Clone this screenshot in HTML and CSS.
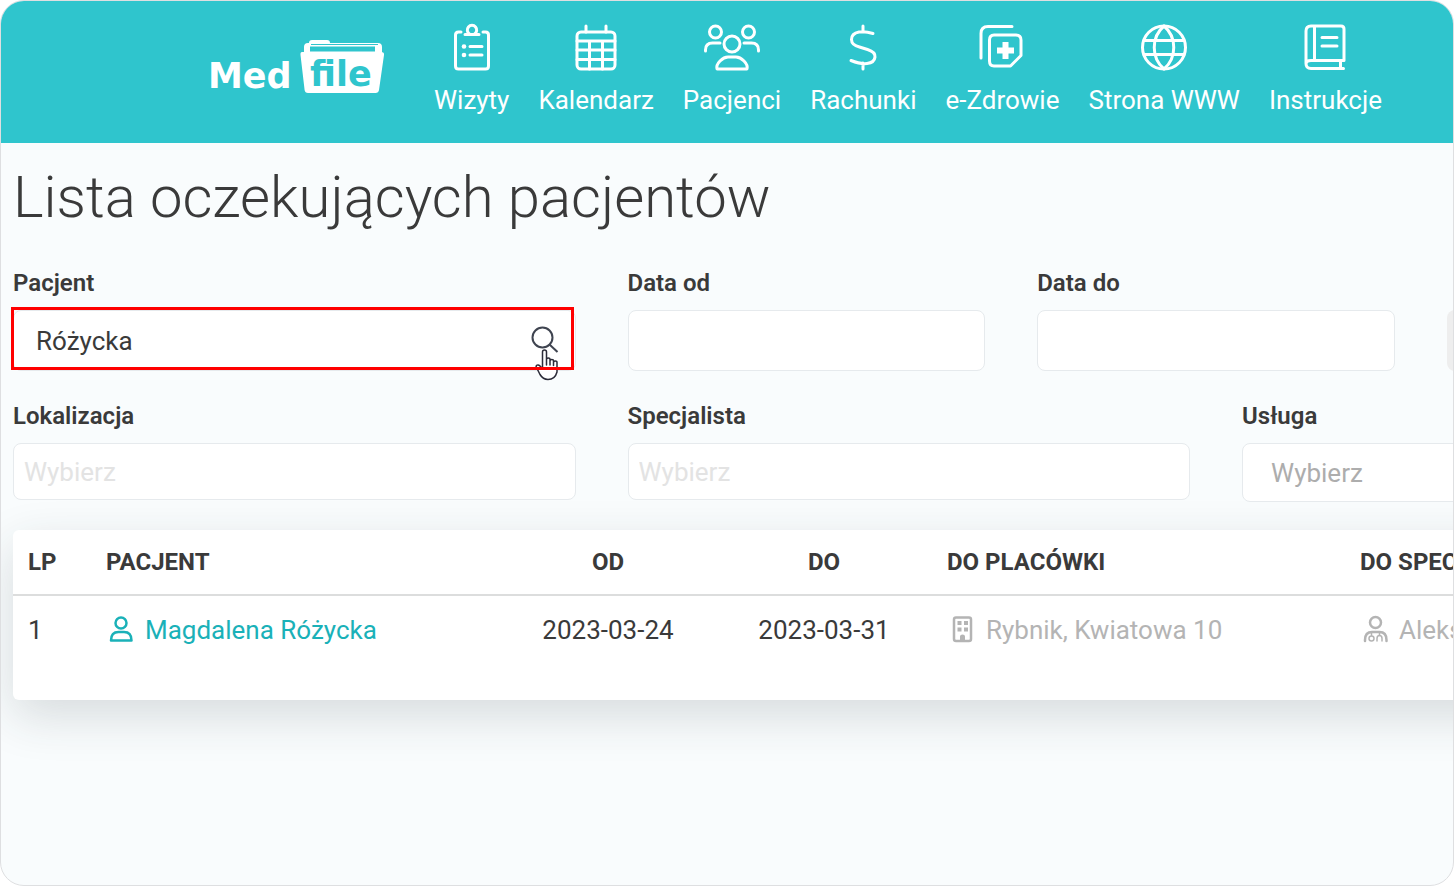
FILE: index.html
```html
<!DOCTYPE html>
<html lang="pl">
<head>
<meta charset="utf-8">
<meta name="viewport" content="width=device-width, initial-scale=1">
<title>Lista oczekujących pacjentów</title>
<link rel="stylesheet" href="styles.css">
</head>
<body>
<div class="frame">
  <header class="topbar">
    <a class="logo" href="#" aria-label="MedFile">
      <svg width="176" height="56" viewBox="0 0 176 56">
        <text class="logo-text" x="-2" y="48">Med</text>
        <path d="M94 14V7q0-4 4-4h1q0-3 3-3h15q3 0 3 3h48q4 0 4 4v7z" fill="#fff"/>
        <path d="M101 4.500h67" stroke="#2fc5cd" stroke-width="1" fill="none"/>
        <path d="M100 6.500h65v5h-65z" fill="#2fc5cd"/>
        <path d="M92 12h79q3.500 0 3 3l-5 35q-.5 3-3.500 3H98q-3 0-3.400-3L90.500 15q-.3-3 1.500-3z" fill="#fff"/>
        <text class="logo-text logo-text-dark" x="100" y="46">file</text>
      </svg>
    </a>
    <nav class="nav">
      <a class="nav-item" href="#">
        <svg class="nav-icon" width="48" height="48" viewBox="0 0 48 48">
          <path d="M13 9h-2.500q-3 0-3 3v31q0 3 3 3h27q3 0 3-3V12q0-3-3-3H35"/>
          <path d="M17 11.500h14M21.500 11a4.700 4.700 0 1 1 5 0"/>
          <path d="M22 23.500h12M22 32h12"/><circle class="dot" cx="16" cy="23.500" r="2.300"/><circle class="dot" cx="16" cy="32" r="2.300"/>
        </svg>
        <span>Wizyty</span>
      </a>
      <a class="nav-item" href="#">
        <svg class="nav-icon" width="48" height="48" viewBox="0 0 48 48">
          <rect x="5" y="9" width="38" height="37" rx="4"/>
          <path d="M14 3v6M34 3v6M5 18h38M5 27h38M5 36.500h38M17.500 18v28M30.500 18v28"/>
        </svg>
        <span>Kalendarz</span>
      </a>
      <a class="nav-item" href="#">
        <svg class="nav-icon" width="60" height="48" viewBox="0 0 60 48">
          <circle cx="13.500" cy="9" r="6"/><circle cx="46.500" cy="9" r="6"/><circle cx="30" cy="21" r="8"/>
          <path d="M3.500 28v-1q0-7 7-7H18M56.500 28v-1q0-7-7-7H42"/>
          <path d="M15 46h30q1-4-3-8-4-4-8-4h-8q-4 0-8 4-4 4-3 8z"/>
        </svg>
        <span>Pacjenci</span>
      </a>
      <a class="nav-item" href="#">
        <svg class="nav-icon" width="48" height="48" viewBox="0 0 48 48">
          <path d="M24 3v6M24 40v6M34 10.500Q26 8 20 9 12.500 10.500 12.500 16.500q0 5.500 8 7.500l8 2.500q8 2.500 7.500 7.500-.5 5.500-8 6.500-6.500.8-16-3"/>
        </svg>
        <span>Rachunki</span>
      </a>
      <a class="nav-item" href="#">
        <svg class="nav-icon" width="48" height="48" viewBox="0 0 48 48">
          <path d="M3 35V10.500q0-7 7-7h24"/>
          <path d="M16 12h22q5 0 5 5v15.500L32.500 43H16q-4.500 0-4.500-5V17q0-5 4.500-5z"/>
          <path class="plus" d="M27.500 19v17M19 27.500h17"/>
        </svg>
        <span>e-Zdrowie</span>
      </a>
      <a class="nav-item" href="#">
        <svg class="nav-icon" width="48" height="48" viewBox="0 0 48 48">
          <circle cx="24" cy="24.500" r="21.500"/>
          <path d="M24 3c-13 11-13 32 0 43M24 3c13 11 13 32 0 43M4 17.500h40M4 31.500h40"/>
        </svg>
        <span>Strona WWW</span>
      </a>
      <a class="nav-item" href="#">
        <svg class="nav-icon" width="48" height="48" viewBox="0 0 48 48">
          <path d="M42.500 45.500H10q-5 0-5-5V8q0-5 5-5h30q3 0 3 3v31.500H10q-5 0-5 3.500M39.500 37.500v8M13.500 3v34.500M21 14.500h15M21 23h15"/>
        </svg>
        <span>Instrukcje</span>
      </a>
    </nav>
  </header>

  <main class="content">
    <h1 class="title">Lista oczekujących pacjentów</h1>

    <form class="filters">
      <div class="field field-wide">
        <label for="patient">Pacjent</label>
        <div class="search">
          <input id="patient" class="control control-padded" type="text" value="Różycka">
          <button class="search-button" type="button" aria-label="Szukaj">
            <svg width="30" height="30" viewBox="0 0 30 30"><circle cx="12.500" cy="12.500" r="10"/><path d="M19.500 19.500l8 7.500"/></svg>
          </button>
          <svg class="pointer" width="24" height="32" viewBox="0 0 24 32">
            <path d="M7.500 20V3q0-2 2-2t2 2v13-5.500q0-1.500 1.800-1.500T15 10.500V16v-4q0-1.500 1.800-1.500t1.700 1.500v4.500-3q0-1.500 1.800-1.500T22 13.500V23q-2 7.500-9 7.500-5 0-8-5L1.500 18.500q-1-1.500.5-2.300t3 .8z"/>
          </svg>
        </div>
      </div>
      <div class="field">
        <label for="from">Data od</label>
        <input id="from" class="control" type="text">
      </div>
      <div class="field">
        <label for="to">Data do</label>
        <input id="to" class="control" type="text">
      </div>
      <div class="field field-action">
        <button class="filter-button" type="button" aria-label="Filtruj"></button>
      </div>
      <div class="field field-wide">
        <label for="location">Lokalizacja</label>
        <input id="location" class="control control-tags" type="text" placeholder="Wybierz">
      </div>
      <div class="field field-wide">
        <label for="specialist">Specjalista</label>
        <input id="specialist" class="control control-tags" type="text" placeholder="Wybierz">
      </div>
      <div class="field field-wide">
        <label for="service">Usługa</label>
        <select id="service" class="control control-select"><option>Wybierz</option></select>
      </div>
    </form>

    <section class="card">
      <table class="list">
        <colgroup><col class="c-no"><col class="c-patient"><col class="c-date"><col class="c-date"><col class="c-place"><col></colgroup>
        <thead>
          <tr><th>LP</th><th>PACJENT</th><th class="center">OD</th><th class="center">DO</th><th>DO PLACÓWKI</th><th>DO SPECJALISTY</th></tr>
        </thead>
        <tbody>
          <tr>
            <td>1</td>
            <td><a class="entry link" href="#">
              <svg class="entry-icon" width="30" height="30" viewBox="0 0 30 30"><circle cx="15" cy="8" r="5.500"/><path d="M5 25.500h20.500q0-8.500-7.500-8.500h-5.500q-7.500 0-7.500 8.500z"/></svg>Magdalena Różycka</a></td>
            <td class="center">2023-03-24</td>
            <td class="center">2023-03-31</td>
            <td><span class="entry muted">
              <svg class="entry-icon" width="30" height="30" viewBox="0 0 30 30"><rect x="7" y="2.500" width="17" height="23.500" rx="2"/><path class="solid" d="M10.500 6h4v4h-4zM17 6h4v4h-4zM10.500 12.500h4v4h-4zM17 12.500h4v4h-4zM13 26.500v-5q0-2 2.500-2t2.500 2v5z"/></svg>Rybnik, Kwiatowa 10</span></td>
            <td><span class="entry muted">
              <svg class="entry-icon" width="30" height="30" viewBox="0 0 30 30"><circle cx="15.500" cy="7.500" r="5.500"/><path d="M5 26v-1q0-8 7-8h7.500q7 0 7 8v1"/><path class="fine" d="M11.500 17v3.500M19.500 17v3.500"/><circle class="fine" cx="11.500" cy="23.500" r="2.500"/><path class="fine" d="M17 26v-2.500q0-3 2.500-3t2.500 3V26"/></svg>Aleksandra Nowak</span></td>
          </tr>
        </tbody>
      </table>
    </section>
  </main>
</div>
</body>
</html>
```
FILE: styles.css
```css
* { box-sizing: border-box; }

body {
  margin: 0;
  background: #fff;
  color: #3a3a3a;
  font: 26px/32px Roboto, "Liberation Sans", sans-serif;
}

.frame {
  min-height: 100vh;
  overflow: hidden;
  border: 1px solid #dedfe1;
  border-radius: 24px;
  background: #f9fcfd;
}

.topbar {
  display: flex;
  align-items: flex-start;
  gap: 48px;
  padding: 22px 24px 27px 209px;
  background: #2fc5cd;
}

.logo { flex: none; margin-top: 17px; }
.logo svg { display: block; overflow: visible; }
.logo-text { fill: #fff; font: 700 35px "DejaVu Sans", sans-serif; }
.logo-text-dark { fill: #2fc5cd; }

.nav { display: flex; gap: 29px; }
.nav-item {
  display: flex;
  flex-direction: column;
  align-items: center;
  gap: 13px;
  color: #fff;
  text-decoration: none;
  white-space: nowrap;
}
.nav-icon { fill: none; stroke: #fff; stroke-width: 3; stroke-linecap: round; stroke-linejoin: round; }
.nav-icon .dot { fill: #fff; stroke: none; }
.nav-icon .plus { stroke-width: 6; stroke-linecap: butt; }

.content { padding: 19px 12px; }

.title {
  margin: 0 0 37px;
  font-size: 58px;
  line-height: 70px;
  font-weight: 300;
  white-space: nowrap;
}

.filters {
  display: grid;
  grid-template-columns: repeat(12, 1fr);
  gap: 31px 52px;
  width: 168.5%;
}
.field { grid-column: span 2; display: flex; flex-direction: column; gap: 13px; min-width: 0; }
.field-wide { grid-column: span 3; }
.field-action { justify-content: flex-end; grid-column: span 5; }
.field label { font-size: 24px; line-height: 28px; font-weight: 600; }

.control {
  display: block;
  width: 100%;
  height: 61px;
  padding: 0 10px;
  border: 1px solid #e6eaed;
  border-radius: 8px;
  outline: 0;
  background: #fff;
  color: #3a3a3a;
  font: inherit;
}
.control-padded { padding: 0 60px 0 22px; }
.control-tags { height: 57px; }
.control-tags::placeholder { color: #e3e3e3; opacity: 1; }
.control-select { height: 59px; padding: 0 28px; color: #adadad; appearance: none; }

.search { position: relative; }
.search::after {
  content: "";
  position: absolute;
  inset: -3px 2px 1px -2px;
  border: 3px solid #f00;
  pointer-events: none;
}
.search-button {
  position: absolute;
  top: 15px;
  right: 16px;
  padding: 0;
  border: 0;
  background: none;
  cursor: pointer;
}
.search-button svg { display: block; fill: none; stroke: #3f4450; stroke-width: 2; }
.pointer {
  position: absolute;
  top: 39px;
  right: 17px;
  fill: #fff;
  stroke: #2b2b38;
  stroke-width: 1.5;
  stroke-linejoin: round;
}

.filter-button { width: 204px; height: 61px; border: 0; border-radius: 8px; background: #eee; }

.card {
  width: 168.5%;
  margin-top: 28px;
  padding-bottom: 37px;
  border-radius: 6px;
  background: #fff;
  box-shadow: 0 16px 48px rgba(40, 50, 55, .16);
}

.list { width: 100%; table-layout: fixed; border-collapse: collapse; }
.c-no { width: 78px; }
.c-patient { width: 409px; }
.c-date { width: 216px; }
.c-place { width: 413px; }
.list th, .list td { height: 68px; padding: 0 15px; text-align: left; white-space: nowrap; }
.list th { height: 65px; border-bottom: 2px solid #dcdddd; font-size: 24px; font-weight: 700; }
.list .center { text-align: center; }

.entry { display: flex; align-items: center; gap: 9px; }
.entry-icon { flex: none; fill: none; stroke: currentColor; stroke-width: 2.5; stroke-linecap: round; stroke-linejoin: round; }
.entry-icon .solid { fill: currentColor; stroke: none; }
.entry-icon .fine { stroke-width: 1.5; }
.link { color: #1ab1b8; text-decoration: none; }
.muted { color: #b4b4b4; }
```
